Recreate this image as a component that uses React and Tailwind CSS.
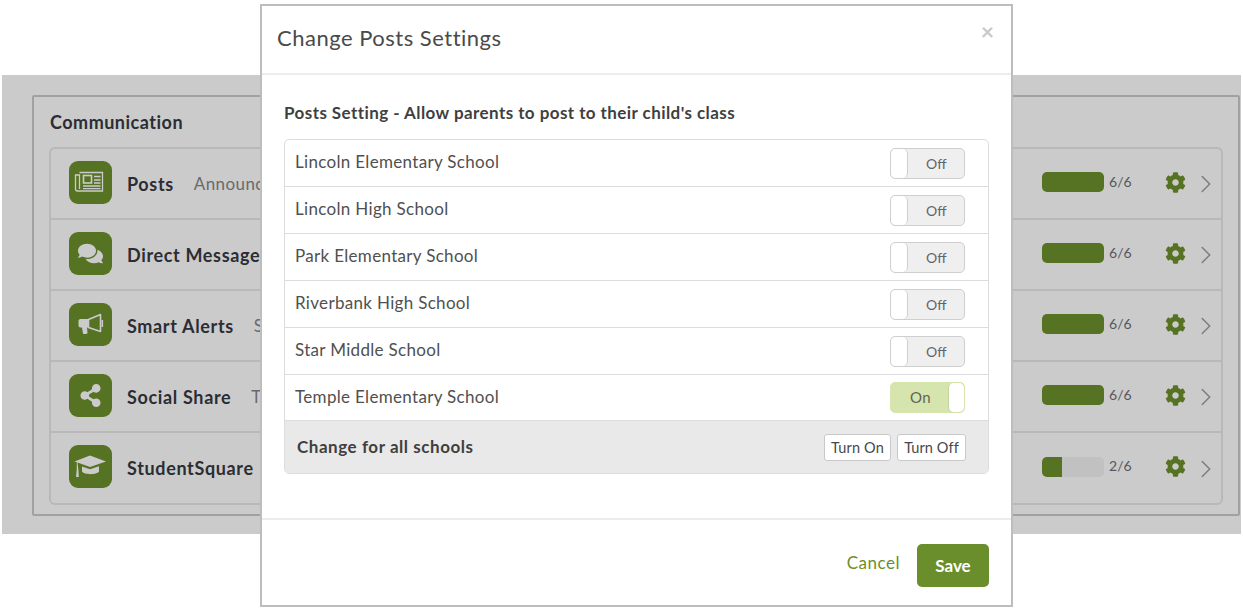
import React from "react";
import { FaComments, FaShareAlt, FaCog } from "react-icons/fa";
import { LuChevronRight } from "react-icons/lu";

const NewsIcon = () => (
  <svg viewBox="0 0 43 43" className="h-[43px] w-[43px]" fill="none" stroke="currentColor" strokeWidth="1.3">
    <path d="M10.5 11.5H33.5V30H8.5C7.2 30 6.5 29 6.5 28V14H10.5V28" />
    <rect x="14.5" y="14.5" width="8" height="7.5" strokeWidth="1.6" />
    <path d="M25 15.5H31.5M25 19H31.5M25 22H31.5M14 25H31.5M14 27.7H31.5" />
  </svg>
);

const HornIcon = () => (
  <svg viewBox="0 0 43 43" className="h-[43px] w-[43px]" fill="currentColor">
    <path d="M11.5 16H19V24.5H18L18.5 30C18.5 31 14.5 31.5 14 30.5L13 24.5H11.5C10 24.5 9.5 23.5 9.5 22V18C9.5 17 10 16 11.5 16Z" />
    <path d="M19.5 16.5L31.5 11.5V28.5L19.5 24.5Z" fill="none" stroke="currentColor" strokeWidth="1.6" strokeLinejoin="round" />
    <rect x="32.5" y="17" width="1.6" height="7" />
  </svg>
);

const CapIcon = () => (
  <svg viewBox="0 0 43 43" className="h-[43px] w-[43px]" fill="currentColor">
    <path d="M21 10.5L37 16.5L21 22L8.5 17.5L9.4 25L9.8 32H7L7.7 25L7.8 17.2L5.5 16.5Z" />
    <path d="M13 21.5L21 24.2L30 21.2V26.5C28 30 15 30 13 26.5Z" />
  </svg>
);

const features = [
  { name: "Posts", desc: "Announcements", icon: <NewsIcon />, on: 6 },
  { name: "Direct Messages", desc: "", icon: <FaComments className="text-[25px]" />, on: 6 },
  { name: "Smart Alerts", desc: "Send alerts", icon: <HornIcon />, on: 6 },
  { name: "Social Share", desc: "Tweet", icon: <FaShareAlt className="text-[23px]" />, on: 6 },
  { name: "StudentSquare", desc: "", icon: <CapIcon />, on: 2 },
];

const schools = [
  { name: "Lincoln Elementary School", on: false },
  { name: "Lincoln High School", on: false },
  { name: "Park Elementary School", on: false },
  { name: "Riverbank High School", on: false },
  { name: "Star Middle School", on: false },
  { name: "Temple Elementary School", on: true },
];

const FeatureRow = ({ item, last }) => (
  <div className={`flex items-center pb-[3px] pl-[18px] ${last ? "h-[70px]" : "h-[71px] border-b-2 border-[#b8b8b8]"}`}>
    <div className="flex h-[43px] w-[43px] shrink-0 items-center justify-center rounded-[9px] bg-[#567223] text-[#cbcbcb]">
      {item.icon}
    </div>
    <span className="ml-[15px] translate-y-[2px] text-[18px] font-bold tracking-[0.65px] text-[#2b2d33]">{item.name}</span>
    <span className="ml-[20px] translate-y-[2px] text-[17px] tracking-[0.4px] text-[#6a6a6a]">{item.desc}</span>
    <div className="ml-auto flex h-[20px] w-[62px] overflow-hidden rounded-[5px] bg-[#c1c1c1]">
      {item.on === 6 ? (
        <div className="w-full bg-[#567223]" />
      ) : (
        <div className="w-[20px] bg-[#567223]" />
      )}
    </div>
    <span className="ml-[5px] w-[56px] -translate-y-[1px] text-[14px] text-[#55575c]">{item.on}/6</span>
    <FaCog className="text-[21px] text-[#567223]" />
    <LuChevronRight className="ml-[5px] translate-y-[2px] text-[30px] text-[#7d7d7d]" strokeWidth={1.2} />
  </div>
);

const Toggle = ({ on }) =>
  on ? (
    <div className="flex h-[31px] w-[75px] items-center justify-between rounded-[5px] border border-[#d5e5ad] bg-[#d5e5ad] text-[15px] text-[#5f6658]">
      <span className="ml-[19px] tracking-[0.5px]">On</span>
      <div className="h-[29px] w-[16px] rounded-[5px] border-l border-[#c4d39f] bg-white" />
    </div>
  ) : (
    <div className="flex h-[31px] w-[75px] items-center rounded-[5px] border border-[#cfcfcf] bg-[#efefef] text-[14px] text-[#62646a]">
      <div className="h-[29px] w-[17px] rounded-[5px] border-r border-[#cfcfcf] bg-white" />
      <span className="ml-[18px] mt-[1px]">Off</span>
    </div>
  );

const App = () => (
  <div className="relative h-[612px] w-[1243px] overflow-hidden bg-white font-['Lato',sans-serif]">
    {/* dimmed page behind the dialog */}
    <div className="mx-[2px] mt-[75px] h-[459px] bg-[#cbcbcb] pl-[30px] pr-[1px] pt-[20px]">
      <div className="h-[421px] rounded-[2px] border-2 border-[#a1a1a1] px-[15px]">
        <h2 className="ml-[1px] mt-[14px] h-[36px] text-[18px] font-bold leading-[22px] tracking-[0.5px] text-[#2b2d33]">Communication</h2>
        <div className="rounded-[6px] border-2 border-[#b8b8b8]">
          {features.map((item, i) => (
            <FeatureRow key={item.name} item={item} last={i === features.length - 1} />
          ))}
        </div>
      </div>
    </div>

    {/* dialog */}
    <div className="absolute left-[260px] top-[4px] flex h-[603px] w-[753px] flex-col border-2 border-[#bdbdbd] bg-white">
      <div className="flex h-[69px] shrink-0 items-center justify-between border-b-2 border-[#ececec] pl-[15px] pr-[17px]">
        <h1 className="-translate-y-[2px] text-[22px] tracking-[0.5px] text-[#4a4a4a]">Change Posts Settings</h1>
        <span className="-translate-y-[8px] text-[23px] font-bold leading-none text-[#c9c9c9]">×</span>
      </div>
      <div className="flex-1 px-[22px] pt-[27px]">
        <h3 className="h-[37px] text-[17px] font-bold leading-[22px] tracking-[0.43px] text-[#3f3f3f]">
          Posts Setting - Allow parents to post to their child's class
        </h3>
        <div className="overflow-hidden rounded-[5px] border border-[#dcdcdc]">
          {schools.map((s, i) => (
            <div key={s.name} className={`flex items-center justify-between border-b border-[#dcdcdc] pl-[10px] pr-[23px] ${i === 5 ? "h-[46px]" : "h-[47px]"}`}>
              <span className="-translate-y-[1px] text-[17px] tracking-[0.32px] text-[#505050]">{s.name}</span>
              <Toggle on={s.on} />
            </div>
          ))}
          <div className="flex h-[52px] items-center justify-between bg-[#e9e9e9] pl-[12px] pr-[22px]">
            <span className="text-[17px] font-bold tracking-[0.55px] text-[#3f3f3f]">Change for all schools</span>
            <div className="flex gap-[6px]">
              <button className="h-[27px] w-[67px] rounded-[3px] border border-[#c9c9c9] bg-white pt-[2px] text-[14.5px] tracking-[0.2px] text-[#45474c]">Turn On</button>
              <button className="h-[27px] w-[69px] rounded-[3px] border border-[#c9c9c9] bg-white pt-[2px] text-[14.5px] tracking-[0.1px] text-[#45474c]">Turn Off</button>
            </div>
          </div>
        </div>
      </div>
      <div className="flex h-[87px] shrink-0 items-center justify-end gap-[17px] border-t-2 border-[#ececec] pr-[22px] pt-[6px]">
        <span className="-translate-y-[3px] text-[17px] tracking-[0.5px] text-[#6b8e2c]">Cancel</span>
        <button className="h-[43px] w-[72px] rounded-[5px] bg-[#6b8e2c] text-[17px] font-bold text-white">Save</button>
      </div>
    </div>
  </div>
);

export default App;
